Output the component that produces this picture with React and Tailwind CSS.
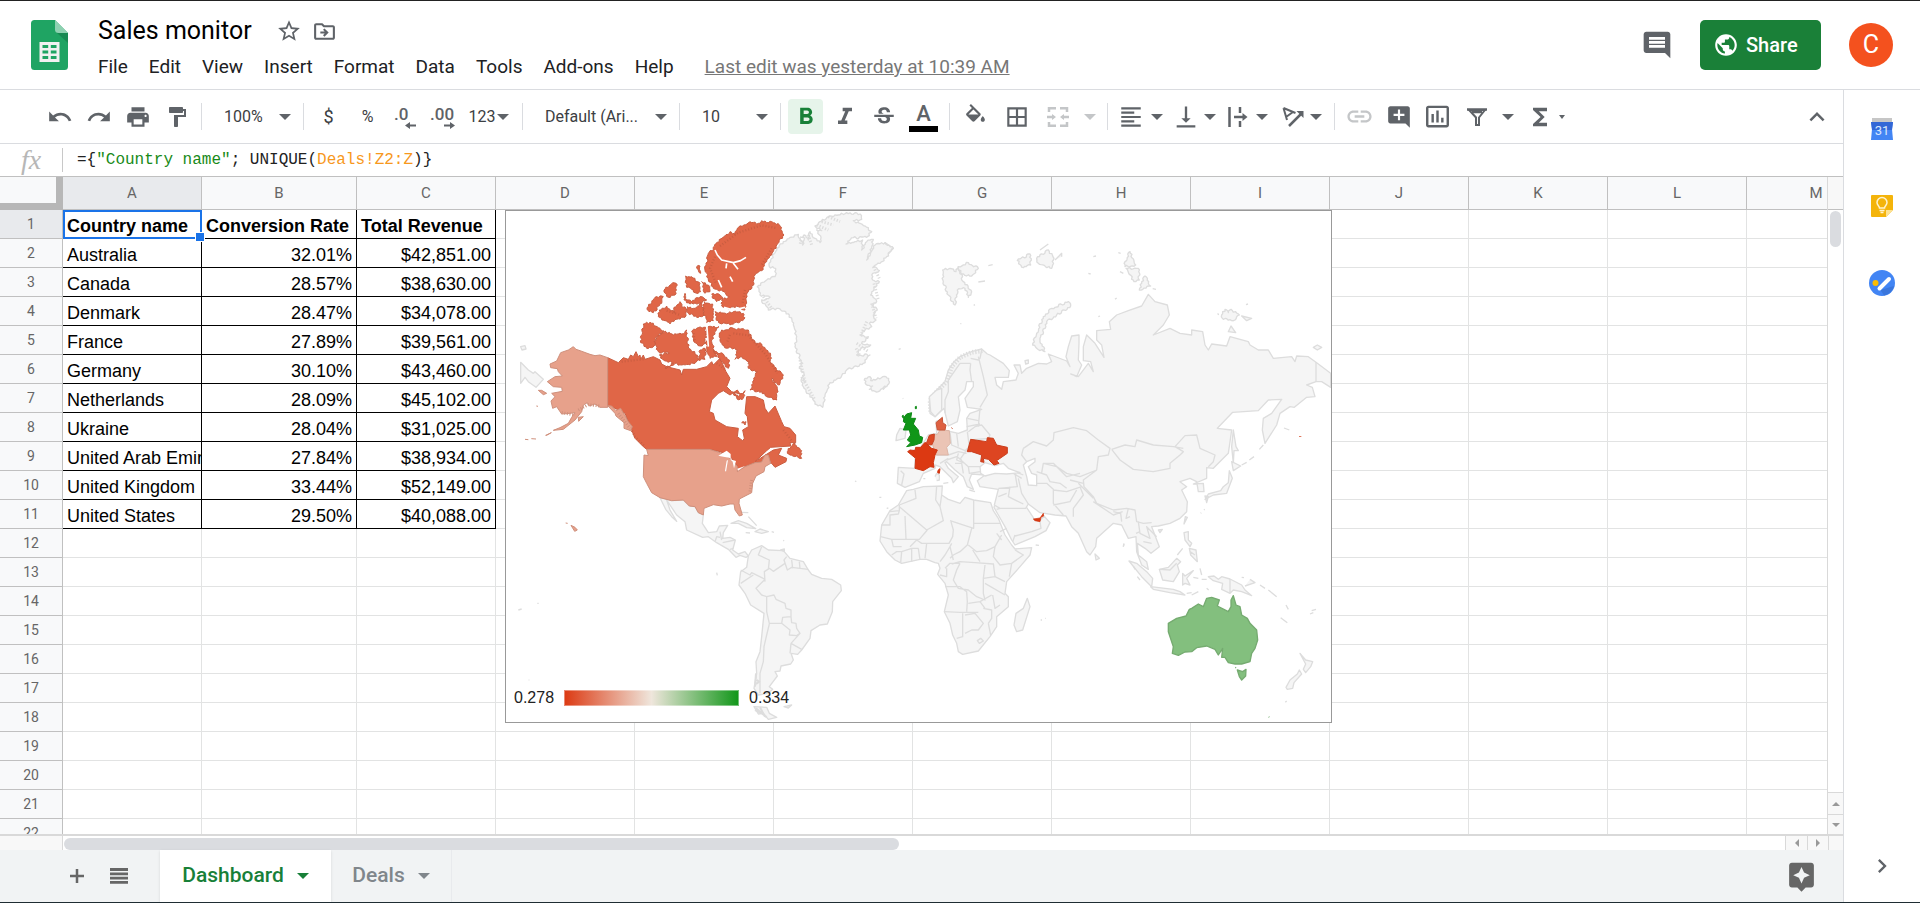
import {
  MdAddComment,
  MdAssistant,
  MdBorderAll,
  MdChevronRight,
  MdComment,
  MdFormatAlignLeft,
  MdFormatBold,
  MdFormatItalic,
  MdFormatPaint,
  MdFunctions,
  MdInsertChartOutlined,
  MdKeyboardArrowUp,
  MdLink,
  MdOutlineDriveFileMove,
  MdPrint,
  MdPublic,
  MdRedo,
  MdStarBorder,
  MdStrikethroughS,
  MdUndo,
  MdVerticalAlignBottom,
} from 'react-icons/md';

const MENUS = ['File', 'Edit', 'View', 'Insert', 'Format', 'Data', 'Tools', 'Add-ons', 'Help'];
const COLUMNS = ['A', 'B', 'C', 'D', 'E', 'F', 'G', 'H', 'I', 'J', 'K', 'L', 'M'];
const ROW_COUNT = 22;

const DATA = [
  ['Country name', 'Conversion Rate', 'Total Revenue'],
  ['Australia', '32.01%', '$42,851.00'],
  ['Canada', '28.57%', '$38,630.00'],
  ['Denmark', '28.47%', '$34,078.00'],
  ['France', '27.89%', '$39,561.00'],
  ['Germany', '30.10%', '$43,460.00'],
  ['Netherlands', '28.09%', '$45,102.00'],
  ['Ukraine', '28.04%', '$31,025.00'],
  ['United Arab Emirates', '27.84%', '$38,934.00'],
  ['United Kingdom', '33.44%', '$52,149.00'],
  ['United States', '29.50%', '$40,088.00'],
];

const Caret = ({ className = '' }) => (
  <svg viewBox="0 0 12 6" className={`h-[6px] w-[12px] shrink-0 fill-current ${className}`} aria-hidden="true">
    <path d="M0 0h12L6 6z" />
  </svg>
);

const Sep = () => <div className="mx-[5px] h-[27px] w-px shrink-0 bg-[#dadce0]" />;

const Tool = ({ label, className = 'w-[35px]', children }) => (
  <button
    type="button"
    aria-label={label}
    className={`mx-[2px] flex h-[35px] shrink-0 items-center justify-center rounded-sm ${className}`}
  >
    {children}
  </button>
);

const ToolSelect = ({ label, value, className }) => (
  <div className={`relative flex h-[35px] shrink-0 items-center ${className}`}>
    <select
      aria-label={label}
      defaultValue={value}
      className="h-full w-full appearance-none bg-transparent pl-[17px] text-[16px] text-[#3c4043]"
    >
      <option>{value}</option>
    </select>
    <Caret className="pointer-events-none absolute right-[7px]" />
  </div>
);

/* ---------- Header ---------- */

const SheetsLogo = () => (
  <svg viewBox="0 0 37 50" className="h-[50px] w-[37px] shrink-0" aria-hidden="true">
    <path d="M3.500 0H24l13 13v33.500A3.500 3.500 0 0 1 33.500 50h-30A3.500 3.500 0 0 1 0 46.500v-43A3.500 3.500 0 0 1 3.500 0z" fill="#1fa463" />
    <path d="M25 12l12 11V13z" fill="#188a53" />
    <path d="M24 0l13 13H27.500A3.500 3.500 0 0 1 24 9.500z" fill="#8ed1b1" />
    <path d="M8.500 22h20v20h-20z" fill="#f1f1f1" />
    <path d="M11.500 25h5.700v3h-5.700zM19.800 25h5.700v3h-5.700zM11.500 30.500h5.700v3h-5.700zM19.800 30.500h5.700v3h-5.700zM11.500 36h5.700v3h-5.700zM19.800 36h5.700v3h-5.700z" fill="#1fa463" />
  </svg>
);

const Header = () => (
  <header className="flex h-[89px] shrink-0 items-center border-b border-[#dadce0] pr-[27px] pl-[31px]">
    <SheetsLogo />
    <div className="ml-[20px] flex min-w-0 flex-col pt-[8px]">
      <div className="flex h-[36px] items-center pl-[10px]">
        <h1 className="text-[25px] leading-[32px] text-black">Sales monitor</h1>
        <button type="button" aria-label="Star" className="ml-[24px]">
          <MdStarBorder className="size-[26px] text-[#5f6368]" />
        </button>
        <button type="button" aria-label="Move" className="ml-[10px]">
          <MdOutlineDriveFileMove className="size-[25px] text-[#5f6368]" />
        </button>
      </div>
      <nav className="flex h-[36px] items-center gap-px text-[19px] whitespace-nowrap text-[#202124]">
        {MENUS.map((name) => (
          <button key={name} type="button" className="px-[10px]">{name}</button>
        ))}
        <a href="#history" className="ml-[20px] text-[#777] underline">
          Last edit was yesterday at 10:39 AM
        </a>
      </nav>
    </div>
    <div className="ml-auto flex shrink-0 items-center">
      <button type="button" aria-label="Comments" className="mr-[27px]">
        <MdComment className="size-8 text-[#5f6368]" />
      </button>
      <button
        type="button"
        className="flex h-[50px] w-[121px] items-center gap-[7px] rounded-[5px] bg-[#1a8038] pl-[13px] text-[20px] font-medium text-white"
      >
        <MdPublic className="size-[26px]" />
        Share
      </button>
      <button
        type="button"
        aria-label="Account"
        className="ml-[28px] flex size-[44px] items-center justify-center rounded-full bg-[#f4511e] text-[25px] text-white"
      >
        C
      </button>
    </div>
  </header>
);

/* ---------- Toolbar ---------- */

const DecimalIcon = ({ text, right }) => (
  <svg viewBox="0 0 28 28" className="mr-[5px] h-7 w-7 fill-current" aria-hidden="true">
    <text x={right ? 1 : 4} y="17" fontSize="17" fontWeight="500" fontFamily="Roboto, sans-serif">{text}</text>
    <path d={right ? 'M15 21.500h6V19l5 3.500-5 3.500v-2.500h-6z' : 'M26 21.500h-6V19l-5 3.500 5 3.500v-2.500h6z'} />
  </svg>
);

const FillIcon = () => (
  <svg viewBox="0 0 24 24" className="size-[25px] fill-current" aria-hidden="true">
    <path d="M16.560 8.940L7.620 0 6.210 1.410l2.380 2.380-5.150 5.150c-.59.59-.59 1.540 0 2.120l5.500 5.500c.29.29.68.44 1.060.44s.77-.15 1.060-.44l5.500-5.500c.59-.58.59-1.530 0-2.120zM5.210 10L10 5.210 14.790 10H5.210zM19 11.500s-2 2.170-2 3.500c0 1.100.9 2 2 2s2-.9 2-2c0-1.330-2-3.500-2-3.500z" />
  </svg>
);

const MergeIcon = () => (
  <svg viewBox="0 0 22 22" className="size-[22px] fill-none stroke-current stroke-[2.5]" aria-hidden="true">
    <path d="M2 6V2.200h7M13 2.200h7V6M2 16v3.800h7M13 19.800h7V16M0 11h7M22 11h-7" />
    <path d="M5 8l4 3-4 3zM17 8l-4 3 4 3z" className="fill-current stroke-none" />
  </svg>
);

const WrapIcon = () => (
  <svg viewBox="0 0 20 20" className="size-5 fill-none stroke-current stroke-[2.5]" aria-hidden="true">
    <path d="M1.500 0v20M12 0v6M12 14v6M6 10h10" />
    <path d="M14.500 6l5 4-5 4z" className="fill-current stroke-none" />
  </svg>
);

const RotateIcon = () => (
  <svg viewBox="0 0 22 20" className="h-5 w-[22px] fill-none stroke-current stroke-2" aria-hidden="true">
    <path d="M1.500 1l12 5M1.500 1l3.500 12M4 10l7-5" />
    <path d="M7 19L19 7" strokeWidth="2.500" />
    <path d="M21.500 4v7l-7-7z" className="fill-current stroke-none" />
  </svg>
);

const FilterIcon = () => (
  <svg viewBox="0 0 20 18" className="h-[18px] w-5 fill-none stroke-current stroke-[2.5]" aria-hidden="true">
    <path d="M2 2h16l-6 7.500V17H9V9.500z" strokeWidth="2" />
    <path d="M0 1.500h20M5 4h10" />
  </svg>
);

const Toolbar = () => (
  <div className="flex h-[54px] shrink-0 items-center overflow-hidden border-b border-[#dadce0] pl-[40px] text-[#5f6368]">
    <Tool label="Undo"><MdUndo className="size-[26px]" /></Tool>
    <Tool label="Redo"><MdRedo className="size-[26px]" /></Tool>
    <Tool label="Print"><MdPrint className="size-[26px]" /></Tool>
    <Tool label="Paint format"><MdFormatPaint className="size-[24px]" /></Tool>
    <Sep />
    <ToolSelect label="Zoom" value="100%" className="w-[91px]" />
    <Sep />
    <Tool label="Currency"><span className="text-[18px] text-[#3c4043]">$</span></Tool>
    <Tool label="Percent"><span className="text-[16px] text-[#3c4043]">%</span></Tool>
    <Tool label="Decrease decimals"><DecimalIcon text=".0" /></Tool>
    <Tool label="Increase decimals"><DecimalIcon text=".00" right /></Tool>
    <Tool label="More formats" className="w-[48px] gap-[2px] pr-[4px]">
      <span className="text-[16px] text-[#3c4043]">123</span>
      <Caret />
    </Tool>
    <Sep />
    <ToolSelect label="Font" value="Default (Ari..." className="w-[146px]" />
    <Sep />
    <ToolSelect label="Font size" value="10" className="w-[90px]" />
    <Sep />
    <Tool label="Bold" className="w-[35px] bg-[#e6f4ea] text-[#188038]"><MdFormatBold className="size-[28px]" /></Tool>
    <Tool label="Italic"><MdFormatItalic className="size-[28px]" /></Tool>
    <Tool label="Strikethrough"><MdStrikethroughS className="size-[26px]" /></Tool>
    <Tool label="Text color" className="w-[37px] flex-col">
      <span className="text-[22px] leading-[25px] font-medium">A</span>
      <span className="h-[6px] w-[29px] bg-black" />
    </Tool>
    <Sep />
    <Tool label="Fill color" className="w-[37px]"><FillIcon /></Tool>
    <Tool label="Borders" className="w-[37px]"><MdBorderAll className="size-[26px]" /></Tool>
    <Tool label="Merge cells" className="w-[37px] text-[#c4c6c8]"><MergeIcon /></Tool>
    <Tool label="Merge options" className="w-[20px] text-[#c4c6c8]"><Caret /></Tool>
    <Sep />
    <Tool label="Horizontal align" className="w-[50px] gap-[7px]"><MdFormatAlignLeft className="size-[26px]" /><Caret /></Tool>
    <Tool label="Vertical align" className="w-[50px] gap-[4px]"><MdVerticalAlignBottom className="size-[28px]" /><Caret /></Tool>
    <Tool label="Text wrapping" className="w-[50px] gap-[8px]"><WrapIcon /><Caret /></Tool>
    <Tool label="Text rotation" className="w-[50px] gap-[6px]"><RotateIcon /><Caret /></Tool>
    <Sep />
    <Tool label="Insert link" className="w-[35px] text-[#c4c6c8]"><MdLink className="size-[29px]" /></Tool>
    <Tool label="Insert comment"><MdAddComment className="size-[26px]" /></Tool>
    <Tool label="Insert chart"><MdInsertChartOutlined className="size-[29px]" /></Tool>
    <Tool label="Filter"><FilterIcon /></Tool>
    <Tool label="Filter views" className="w-[20px]"><Caret /></Tool>
    <Tool label="Functions"><MdFunctions className="size-[28px]" /></Tool>
    <svg viewBox="0 0 6 4" className="h-[4px] w-[6px] fill-current" aria-hidden="true"><path d="M0 0h6L3 4z" /></svg>
    <button type="button" aria-label="Hide the menus" className="mr-[11px] ml-auto">
      <MdKeyboardArrowUp className="size-[30px]" />
    </button>
  </div>
);

const FormulaBar = () => (
  <div className="flex h-[33px] shrink-0 items-center border-b border-[#c0c0c0]">
    <div className="w-[62px] text-center font-['Liberation_Serif',serif] text-[28px] leading-[30px] text-[#b7b7b7] italic">fx</div>
    <div className="h-[24px] w-px bg-[#c8c8c8]" />
    <div className="pl-[14px] font-['Liberation_Mono',monospace] text-[16px] whitespace-pre text-[#222]">
      {'={'}
      <span className="text-[#188a18]">"Country name"</span>
      {'; UNIQUE('}
      <span className="text-[#f7981d]">Deals!Z2:Z</span>
      {')}'}
    </div>
  </div>
);

/* ---------- Geo chart ---------- */

// Land outlines, in thirds of a pixel. Each group has its own origin.
const NORTH_AMERICA = {
  greenland: [
    'M772 260L800 240 825 230 827 205 808 200 812 180 830 150 850 125 870 112 895 103 908 135 912 105 925 120 930 95 945 115 960 128 962 108 950 90 965 92 945 78 960 65 990 48 1015 45 1040 38 1080 42 1085 58 1060 62 1095 78 1115 95 1100 112 1060 113 1038 132 1065 125 1088 120 1085 150 1100 125 1120 118 1115 140 1100 180 1125 135 1155 128 1180 145 1160 170 1140 190 1120 200 1138 212 1118 220 1118 240 1138 245 1122 262 1112 285 1130 305 1115 315 1132 330 1120 345 1128 360 1108 370 1115 380 1095 390 1080 405 1105 410 1085 430 1112 435 1075 450 1070 465 1110 465 1090 490 1040 510 1020 535 990 548 975 585 968 622 945 612 930 585 918 575 910 560 905 535 912 520 898 505 908 490 885 440 890 410 880 375 868 345 835 325 805 330 785 300 810 292 780 285z',
    'M1095 535L1110 530 1112 542 1125 540 1148 530 1166 535 1166 552 1135 575 1108 568 1118 558 1098 553z',
  ],
  land: [
    'M62 487L85 510 100 520 105 515 130 538 108 562 85 545 75 532 62 550z',
    'M62 440L75 437 78 447 66 450z',
    'M1288 590L1310 570 1325 565V630L1305 650 1292 635z',
  ],
  usa: [
    'M323 473L300 465 285 467 270 463 240 452 228 448 220 440 205 450 182 458 170 483 150 492 152 503 172 506 175 515 187 528 165 530 142 545 160 560 185 562 187 574 155 580 165 590 153 603 158 625 170 620 185 642 210 640 225 638 215 652 205 670 180 683 160 691 190 688 225 660 245 635 250 615 262 608 268 618 285 612 300 622 323 622z',
    'M323 617L345 640 348 648 372 668 372 685 392 692 397 680 385 665 362 625 348 632 335 618z',
    'M440 748H628L660 758 690 775 712 800 712 815 735 800 765 788 785 786 795 765 805 765 812 790 795 800 792 815 768 828 758 850 755 878 718 897 717 910 727 945 718 948 705 930 702 912 690 912 665 918 640 914 612 925 610 945 595 938 585 920 568 918 550 900 515 902 480 893 455 878 440 850 430 830 432 765 445 767z',
    'M213 976L225 982 232 990 224 994z',
    'M115 571L125 571 140 580 130 584z',
    'M235 652L250 650 236 664z',
    'M137 706L154 698 140 706zM75 718L85 719M94 716L108 717M197 969L203 970M109 618L114 619',
  ],
  canada: 'M323 473L355 488 370 473 385 478 392 465 400 470 408 455 415 470 420 465 422 478 430 465 435 478 460 470 480 480 485 492 500 500 540 510 545 525 550 508 590 508 620 500 635 485 640 495 660 475 678 515 690 535 680 560 695 575 720 582 712 570 690 585 670 572 655 580 635 600 628 635 640 640 645 660 680 680 715 685 712 710 728 722 733 715 728 690 745 680 742 650 735 640 740 590 765 590 790 600 795 625 805 640 825 618 845 665 852 680 870 685 887 705 887 728 870 728 872 738 812 742 800 752 765 785 820 750 845 745 835 765 860 775 858 785 825 802 815 790 812 790 805 765 795 765 785 786 765 788 735 800 712 815 710 795 695 775 685 765 660 755 628 748H440L430 740 405 715 395 690 375 640 345 625 323 617z',
  canadaIslands: [
    'M665 390L700 385 745 390 755 415 770 430 785 432 800 450 812 465 812 490 850 525 838 555 815 535 832 565 830 600 800 590 785 575 750 570 762 540 772 515 745 505 748 485 725 470 705 478 712 450 690 440 680 445 665 430 658 405z',
    'M462 425L475 405 495 393 520 405 545 402 560 390 565 440 585 460 600 478 585 490 545 495 525 490 495 505 520 490 490 480 478 465 508 460 475 455z',
    'M430 372L450 367 480 385 492 393 465 415 462 438 440 445 422 428z',
    'M575 395L590 385 617 382 615 430 600 438 580 420z',
    'M622 382L657 380 640 405 636 430 650 470 630 475 618 455z',
    'M600 450L615 445 615 478 595 480z',
    'M640 450L672 465 688 480 685 505 660 480z',
    'M648 130L690 95 705 105 712 85 745 68 775 70 785 62 820 68 838 75 852 105 830 135 815 165 800 185 785 212 765 225 762 250 745 275 738 300 735 330 715 320 690 325 665 318 665 300 688 290 672 275 640 265 625 240 615 210 625 160 640 148z',
    'M645 335L680 342 700 335 730 340 732 358 700 372 660 370 648 355z',
    'M478 330L500 318 525 340 522 322 540 305 545 320 558 325 555 352 530 358 510 372 495 362 475 350z',
    'M442 322L465 292 490 290 485 310 460 338 447 335z',
    'M492 270L518 248 532 255 525 285 505 292z',
    'M557 228L575 230 600 250 602 275 590 280 575 268 560 262z',
    'M562 320L580 325 605 310 612 345 590 352 565 340z',
    'M605 245L625 255 630 275 615 280z',
    'M635 282L660 285 668 298 650 305 638 295z',
    'M612 305L638 312 640 362 620 368 612 335z',
    'M590 200L600 198 602 220z',
    'M555 280L560 300 575 305 600 290 620 300 600 308 570 312 552 300z',
    'M872 740L885 730 890 742 905 752 905 775 890 768 870 765 862 755z',
    'M700 580L715 590 735 572 730 595 712 598z',
    'M725 668L738 665 735 675z',
  ],
};

const SOUTH_AMERICA = {
  land: [
    'M480 53L515 62 550 60 568 78 585 80 595 98 610 105 607 130 625 158 650 155 658 138 683 136 670 158 668 175 690 172 706 180 698 210 715 222 735 215 745 228 738 232 720 226 708 232 685 208 650 188 625 170 608 172 560 150 555 125 530 105 510 75 500 60 510 90 530 124 515 110 497 88z',
    'M745 228L755 210 785 197 805 210 850 212 870 235 910 245 925 270 935 283 965 295 995 298 1022 315 1024 332 998 365 997 395 982 432 960 435 933 452 930 475 905 510 893 523 873 520 880 540 872 552 843 558 840 573 825 575 832 588 808 620 818 628 805 640 775 645 762 625 770 580 768 545 780 515 785 470 792 400 752 375 735 340 717 315 722 275 740 262z',
    'M762 680L800 682 808 700 830 712 805 718 790 700 775 702z',
    'M852 680L862 678 875 675 865 684z',
    'M693 130L715 122 740 130 767 146 740 143 715 130zM765 155L780 147 805 155 785 160zM815 155L822 157M737 158L750 159M842 210L853 207 853 214z',
    'M725 97L745 98M745 110L770 137M650 278L652 286M55 390L65 387M112 370L116 370M1065 3L1069 5M1138 52L1144 52M1160 85L1165 84M86 600L88 600M850 181L852 183',
  ],
  lines:
    'M785 200L775 225 808 240 805 268M722 270L750 285 755 278 795 298M795 305L793 275 808 265 820 274 855 250M860 230L852 240 862 270 875 262 925 268M875 240L878 265M898 245L900 265M760 285L722 310M793 300L768 325 785 345 800 350 800 395M800 350L822 345 828 358 855 370 858 385 873 390 873 410M800 395L808 430 845 430 848 412 873 410 875 428 888 430 890 445 900 460 890 467 868 465 870 450 845 430M808 432L800 465 792 500 790 545 780 580 780 640M873 490L905 508M873 490L870 520M900 460L873 490M660 155L665 180M645 185L650 170 660 172M668 188L705 180M690 208L700 205',
};

const EURASIA = {
  arctic: [
    'M458 435L470 400 490 350 515 325 565 305 572 318 530 345 500 365 480 420 495 455 470 445z',
    'M188 210L210 205 228 215 235 200 250 245 275 275 265 292 255 265 232 270 225 315 205 285 190 245z',
    'M235 200L265 188 295 205 275 228 245 222z',
    'M412 182L450 162 452 195 430 203z',
    'M470 175L505 150 522 175 515 205 475 190z',
    'M735 185L750 155 767 195 735 200z',
    'M738 205L775 205 778 240 762 245z',
    'M778 270L785 250 795 228 812 258z',
    'M1025 345L1035 328 1045 338 1053 328 1078 345 1065 360 1030 358z',
  ],
  land: [
    'M150 640L148 595 165 590 165 575 195 545 205 510 222 485 240 470 275 455 305 447 322 462 330 465 370 490 388 512 385 532 345 532 350 555 365 568 370 545 408 540 415 520 402 495 420 495 425 520 440 505 475 490 500 492 515 485 505 462 560 483 570 500 558 470 565 440 575 408 597 405 597 430 595 480 605 495 590 530 572 522 595 530 625 490 640 515 632 485 610 482 610 440 620 405 645 430 672 472 665 435 650 420 650 392 692 388 688 365 710 345 745 332 785 318 805 283 825 305 862 315 868 345 850 375 820 405 870 385 900 400 935 405 935 390 968 395 975 435 985 450 995 432 1040 438 1050 410 1105 425 1110 435 1135 450 1165 450 1180 475 1235 470 1245 485 1250 468 1285 470 1308 487 1352 520 1352 562 1325 545 1308 545 1280 555 1297 562 1305 590 1280 592 1243 622 1230 620 1200 640 1190 675 1155 730 1147 690 1150 655 1175 640 1205 598 1165 600 1135 632 1058 637 1012 685 1055 690 1045 760 1000 805 980 803 980 835 940 852 970 850 972 875 955 875 950 845 930 835 900 845 920 860 905 870 922 905 920 935 900 955 870 970 835 978 815 980 838 1040 813 1060 795 1045 772 1030 775 1065 800 1085 805 1108 785 1095 770 1055 768 1010 745 1015 725 975 700 970 650 1015 647 1040 630 1065 620 1055 595 1000 575 980 558 948 525 945 480 938 445 912 437 925 360 925 343 915 355 868 300 860 292 842 315 825 275 822 268 840 280 868 262 860 250 830 225 810 200 785 195 788 205 805 235 830 220 848 215 835 180 800 165 795 165 805 130 820 118 845 75 862 52 850 55 802 105 805 105 770 85 755 120 745 145 705 170 700 168 665 187 655 190 690 235 700 262 690 260 655 270 640 305 628 262 622 255 595 280 560 280 545 260 545 255 570 235 590 240 630 232 665 205 678 192 625 165 650z',
    'M48 722L50 705 60 685 78 690 75 715z',
    'M480 150L505 132M525 180L545 160 545 170M325 197L338 194M295 246L315 243',
    'M715 158L722 160M625 220L632 222M640 170L648 168M818 266L828 268M720 215L730 220',
    'M1085 348L1115 355 1100 362zM1045 395L1053 378 1067 398zM1300 442L1312 435 1325 442 1312 450zM1013 340L1016 345M1098 314L1104 312',
    'M435 482L445 480 445 490 437 492zM705 298L710 294M655 350L660 348',
    'M1060 690L1068 740 1075 752 1062 752 1060 790 1055 740z',
    'M1055 785L1082 798 1060 812zM1048 812L1057 835 1040 880 1000 885 975 898 985 882 1022 872 1030 860 1045 848zM975 888L985 890 980 908z',
    'M1085 795L1100 787M1108 780L1122 770M1138 748L1150 735M1212 684L1228 690M912 972L916 950 922 952zM165 830L170 820 178 825 178 840 170 842M190 850L205 848M268 870L285 875',
    'M962 940L964 938M972 930L974 928M730 1040L732 1030M56 448L62 446M68 595L70 596M241 371L244 371M281 316L285 314M130 836L136 836M0 180L15 128 40 145 22 165z',
    'M0 540L15 532 26 550 10 568z',
  ],
  water: [
    'M302 820L300 800 315 788 345 797 370 790 385 805 420 818 380 822 345 820 315 828z',
    'M430 795L440 785 465 775 465 785 445 800 455 820 470 825 470 857 445 855 440 830z',
  ],
  lines:
    'M195 640L195 600 205 575 205 540 240 490 272 490M275 545L270 510 272 490M272 475L295 480 300 475M295 470L310 530 322 585 300 622M305 450L300 475M430 745L460 725 500 738 520 720 522 698 580 683 620 692 655 720 690 745 685 765 655 770 650 810 600 830 560 820 530 800 490 790 485 818M430 745L425 765 440 785M695 748L735 735 765 740 770 720 820 735 880 740 910 745M900 765L870 790 870 805 820 815 760 808 720 780 695 748M900 765L910 755 885 740 915 707 950 705 960 745 1005 765 1000 785 985 800M650 810L610 840 612 860 640 890 650 910 700 930 740 925 765 930 770 965 790 970 815 968M600 860L610 885 580 925 580 950M415 835L425 880 445 912M470 850L500 850 520 868 520 910 550 945M520 870L560 875 605 860M520 915L570 905 590 870M470 815L500 825 510 845 540 850 560 865M490 790L520 790 560 830 600 820M570 840L610 850M405 820L412 860 355 865M390 860L385 890 430 912M355 890L380 880M210 697L215 735 255 752 268 740 262 695M265 695L285 680 305 675 330 705 325 715 270 720M262 655L295 662M260 680L300 672M260 750L240 778 265 800 300 800M265 800L268 820 300 815M225 790L245 790 250 820M200 780L230 770 245 780M170 765L205 765 235 755 260 760M205 775L180 790M62 812L72 822 65 855M380 805L430 825M400 820L425 835M700 935L722 940 725 965M745 925L738 955 750 950M775 965L780 1000 810 1015 800 980 830 1010M768 1000L780 995M640 905L700 945 728 935M790 1025L815 1030M1308 487V545M595 850L640 895M300 625L295 680M230 700L235 740M235 760L230 780 255 790',
};

const SOUTH = {
  land: [
    'M-100 32L-80 28 -50 20 7 18 5 45 25 58 60 70 75 52 101 60 152 68 160 92 175 115 195 165 215 195 225 207 275 203 270 225 240 260 200 305 195 340 205 350 205 380 170 410 170 440 150 470 115 513 68 523 55 515 50 490 38 465 30 430 13 395 25 345 15 310 -7 283 0 265 -5 250 -15 248 -40 238 -60 238 -115 250 -135 240 -160 215 -180 183 -175 135 -150 92 -125 75z',
    'M262 355L270 380 248 450 230 455 222 435 228 400 250 385z',
    'M162 82L170 60 205 50 255 75 278 110 285 122 300 122 312 108 330 128 318 152 285 170 225 195 215 180 195 140 175 105z',
    'M465 222L478 235 468 240zM655 150L667 148 660 158z',
    'M732 158L745 155 745 180 755 190 750 200 735 180zM748 205L768 210 772 245 752 225zM712 225L728 205M750 215L765 225',
    'M658 268L685 262 710 235 722 245 712 255 718 275 700 305 668 300z',
    'M567 243L590 250 620 275 638 295 635 320 605 290z',
    'M632 320L700 328 720 335 735 345 690 338 640 328z',
    'M728 280L735 288 760 272 740 295 750 315 735 310 728 315z',
    'M740 340L755 338M755 345L775 335M780 265L785 285M760 292L775 295M785 298L800 298M580 258L585 268M592 290L600 300M800 325L806 330',
    'M805 290L822 288 835 298 845 290 870 297 905 315 915 330 935 347 905 335 880 330 870 340 845 328 848 310 820 302z',
    'M915 318L945 308 930 298M905 292L912 293M960 315L975 325M985 330L1010 350M1038 375L1045 388M1022 413L1042 428M1110 402L1120 398M1115 392L1128 388',
    'M1080 520L1097 540 1118 545 1112 560 1097 578 1090 568 1097 552z',
    'M1038 622L1050 600 1072 582 1078 570 1085 582 1062 608 1058 625 1042 628z',
    'M1036 667L1040 663M302 420L306 420M316 415L318 415M287 195L297 196M550 200L552 192',
  ],
  lines:
    'M-75 30L-72 55 -122 75 -122 92 -150 95M-122 80L-40 150 10 122 0 80 -13 60 -10 18M5 45L0 80M101 60V145L30 122M101 130H180M-105 108L-102 178 -145 178M-175 135L-150 135 -150 105 -125 102 -122 92M-178 170L-145 178 -140 200 -115 200M-102 178L-62 178 -38 150M-90 200L-70 180 -55 190 -42 190 27 190 38 170 40 150 33 125M95 145L82 195 60 215 40 225 30 235M85 195L110 215 140 212 165 200 185 165M35 252L60 245 105 248 160 252M98 210L120 245M165 200L160 230 180 255 215 250 250 225 225 210M215 250L208 290M160 250L165 290 195 305M135 255L130 295 165 290M60 250L50 270 40 300 55 325 85 330 110 350 135 360 130 340 130 295M15 320L60 320 80 335 82 365 80 395M13 395L60 397 115 397M68 400V470L50 475M75 405L105 400 130 430 115 450 95 450 75 460M130 385L155 390 155 415 145 430M85 370L120 365 155 345M120 365L135 385M158 345L165 385 180 375M135 310L195 345M145 430L152 465M112 482L122 475 130 483 118 490zM-45 235L-40 190M-85 205L-85 245M-65 205L-60 240M-115 215L-118 248M-145 225L-130 215 -115 215 -85 205 -65 205M0 245L15 225 30 200 35 190M15 265L30 250 60 250M0 285L20 290 20 265M30 200L40 240M300 125L303 145 275 155 225 168M180 155L200 145M170 160L185 180M870 297V340M660 268L690 270 710 250M225 165L218 185M205 50L200 80 170 88',
};

const COUNTRIES = [
  { name: 'Germany', fill: '#ebc4b5', stroke: '#dcb6a7', d: 'M162 705L172 703 180 690 208 692 211 730 200 742 205 765 168 765 158 735z' },
  { name: 'Denmark', fill: '#de6041', stroke: '#c85639', d: 'M168 668L187 652 188 668 198 675 195 690 172 690zM214 683L218 686' },
  { name: 'Netherlands', fill: '#dc4825', stroke: '#c94121', d: 'M138 733L148 706 163 702 162 720 155 735z' },
  { name: 'France', fill: '#dc3912', stroke: '#cf3511', d: 'M83 755L90 750 105 752 107 742 122 742 135 727 155 745 172 750 165 765 160 788 162 802 150 800 130 812 105 805 107 775zM174 811L180 806 178 820 173 818z' },
  { name: 'Ukraine', fill: '#dd4521', stroke: '#ca3e1d', d: 'M272 718L320 725 322 713 340 715 350 735 382 742 382 760 350 782 357 790 342 795 325 778 310 775 312 787 302 785 305 765 275 755 262 755z' },
  { name: 'United Kingdom', fill: '#109618', stroke: '#0e8a16', d: 'M72 652L80 642 95 638 92 655 107 655 100 672 115 690 118 708 128 712 125 728 105 735 80 740 92 728 82 720 92 705 88 690 70 690 78 670 70 665zM106 620L109 619 109 626 106 626zM66 648L70 646 70 655z' },
];

// Breaks the sides of a closed outline into short steps, so that it reads as a fjord coast.
const roughen = (d) => {
  const n = d.match(/-?\d+/g).map(Number);
  const points = [];
  for (let i = 0; i < n.length; i += 2) {
    const [x1, y1] = [n[i], n[i + 1]];
    const [x2, y2] = [n[(i + 2) % n.length], n[(i + 3) % n.length]];
    const length = Math.hypot(x2 - x1, y2 - y1) || 1;
    const steps = Math.max(1, Math.round(length / 5));
    for (let s = 0; s < steps; s += 1) {
      const shift = s === 0 ? 0 : Math.sin(x1 * 3 + y1 * 7 + s * s * 1.7) * 3;
      const x = x1 + ((x2 - x1) * s) / steps - ((y2 - y1) / length) * shift;
      const y = y1 + ((y2 - y1) * s) / steps + ((x2 - x1) / length) * shift;
      points.push(`${x.toFixed(1)} ${y.toFixed(1)}`);
    }
  }
  return `M${points.join('L')}z`;
};

const Shapes = ({ paths, ...rest }) => (
  <g {...rest}>{paths.map((d) => <path key={d} d={d} />)}</g>
);

const LAND = { fill: '#f5f5f5', stroke: '#dddddd', strokeWidth: 4 };
const GREENLAND = NORTH_AMERICA.greenland.map(roughen);
const CANADA = [NORTH_AMERICA.canada, ...NORTH_AMERICA.canadaIslands.map(roughen)];
const ARCTIC = EURASIA.arctic.map(roughen);

const GeoChart = () => (
  <figure
    aria-label="Conversion rate by country"
    className="absolute top-[33px] left-[505px] h-[513px] w-[827px] overflow-hidden border border-[#999] bg-white"
  >
    <svg viewBox="0 0 2475 1533" className="h-full w-full" strokeLinejoin="round" aria-hidden="true">
      <g transform="translate(1302 807)">
        <Shapes paths={SOUTH.land} {...LAND} />
        <path d={SOUTH.lines} {...LAND} fill="none" />
      </g>
      <g transform="translate(1122 -33)">
        <Shapes paths={EURASIA.land} {...LAND} />
        <Shapes paths={ARCTIC} {...LAND} />
        {/* fjords and skerries along the Norwegian coast */}
        <path d="M152 635L150 600 170 575 200 545 215 500 240 472 275 457 310 452" fill="none" stroke="#dddddd" strokeWidth="14" strokeDasharray="4 5" />
        <path d={EURASIA.lines} {...LAND} fill="none" />
        <Shapes paths={EURASIA.water} {...LAND} fill="#fff" />
        {COUNTRIES.map(({ name, fill, stroke, d }) => (
          <path key={name} d={d} fill={fill} stroke={stroke} strokeWidth="3" />
        ))}
        <path d="M1257 708h7v3h-7z" fill="#e07a60" />
      </g>
      <g transform="translate(-18 807)">
        <Shapes paths={SOUTH_AMERICA.land} {...LAND} />
        <path d={SOUTH_AMERICA.lines} {...LAND} fill="none" />
        <path d="M768 580L765 620M770 600L778 605 768 612M768 685L800 712M780 682L795 710M765 690L785 700" {...LAND} strokeWidth="6" fill="none" />
      </g>
      <g transform="translate(1302 807)">
        <path d="M280 117L300 114 310 100 311 108 303 112 300 125 285 122z" fill="#dc3912" stroke="#cf3511" strokeWidth="2" />
        <g fill="#83bf7e" stroke="#75ab70" strokeWidth="4">
          <path d="M685 430L710 415 738 408 748 388 755 385 775 372 790 380 800 355 815 352 838 360 832 378 865 395 873 380 873 360 880 347 888 375 900 380 905 405 922 415 930 430 950 450 953 480 945 505 935 520 930 545 905 552 885 552 865 548 855 532 845 532 848 505 835 525 825 508 800 498 770 503 755 515 735 516 715 526 697 520 700 500 685 455z" />
          <path d="M892 570L908 575 918 568 917 588 905 600 898 590zM886 562L888 564M986 710L988 712" />
        </g>
      </g>
      <g transform="translate(-18 -33)">
        <Shapes paths={GREENLAND} {...LAND} />
        <Shapes paths={NORTH_AMERICA.land} {...LAND} />
        <path
          d="M905 110L900 135M925 105L935 135M950 75L985 90M965 65L1000 75M985 50L1020 65M1120 200L1138 235M1122 250L1135 300M1115 310L1128 355M1100 365L1085 400M1070 430L1105 455M1068 445L1080 468M900 480L915 545M905 530L945 600M790 290L815 325"
          fill="none" stroke="#dddddd" strokeWidth="9" strokeDasharray="4 5"
        />
        <Shapes paths={CANADA} fill="#e06647" stroke="#c95d41" strokeWidth="3" />
        <path
          d="M660 138L715 98 785 76 828 84M815 145L785 195M645 170L630 205 648 250M735 270L728 310M700 400L745 406 798 465 832 520M690 405L680 430M650 490L675 508M850 690L875 722M380 660L405 710 435 740M580 400L585 425M500 332L540 345M365 485L435 477"
          fill="none" stroke="#c95d41" strokeWidth="7" strokeDasharray="3 6"
        />
        <path d="M645 150L652 165 665 180 700 188 722 182 738 172M680 190L678 205M700 190L714 208M655 240L665 262M690 230L698 245M672 322L700 330 735 322M620 370L625 440" fill="none" stroke="#fff" strokeWidth="5" />
        <Shapes paths={NORTH_AMERICA.usa} fill="#e7a18b" stroke="#cf907c" strokeWidth="3" />
        <path d="M235 630L265 614 300 618M185 638L225 645M355 640L390 685M755 840L750 875" fill="none" stroke="#cf907c" strokeWidth="9" strokeDasharray="3 5" />
        <path d="M655 767L680 752 692 762 692 774 670 770zM684 780L678 815 675 812 680 782zM690 778L708 783 702 805 698 785zM712 806L735 798 714 812z" fill="#fff" />
      </g>
    </svg>
    <figcaption className="absolute bottom-[14px] left-[8px] flex items-center gap-[10px] font-['Liberation_Sans',sans-serif] text-[16px] leading-[20px] text-[#222]">
      <span>0.278</span>
      <span className="h-[16px] w-[175px] border border-white/40 bg-[linear-gradient(to_right,#dc3912,#efe6dc,#109618)] bg-origin-border" />
      <span>0.334</span>
    </figcaption>
  </figure>
);

/* ---------- Grid ---------- */

const cellClass = (row, col) => {
  if (col > 2 || row > 10) return 'border-[#e2e3e3]';
  if (row === 0) return 'border-black font-bold';
  return col === 0 ? 'border-black' : 'border-black text-right';
};

const Grid = () => (
  <div className="relative min-w-0 flex-1 overflow-hidden bg-white">
    <table className="w-[1886px] table-fixed border-separate border-spacing-0">
      <colgroup>
        <col className="w-[63px]" />
        {COLUMNS.map((c) => <col key={c} className={c === 'B' ? 'w-[155px]' : 'w-[139px]'} />)}
      </colgroup>
      <thead>
        <tr className="h-[33px]">
          <td className="border-r-[7px] border-b-[7px] border-[#b7b7b7] bg-[#f8f9fa]" />
          {COLUMNS.map((c) => (
            <th
              key={c}
              scope="col"
              className={`border-r border-b border-[#c0c0c0] text-[15px] leading-[20px] font-normal text-[#666] ${c === 'A' ? 'bg-[#e8eaed]' : 'bg-[#f8f9fa]'}`}
            >
              {c}
            </th>
          ))}
        </tr>
      </thead>
      <tbody className="font-['Liberation_Sans',sans-serif] text-[18px] text-black">
        {Array.from({ length: ROW_COUNT }, (_, row) => (
          <tr key={row} className="h-[29px]">
            <th
              scope="row"
              className={`border-r border-b border-[#c0c0c0] font-[Roboto,sans-serif] text-[14px] leading-[20px] font-normal text-[#666] ${row === 0 ? 'bg-[#e8eaed]' : 'bg-[#f8f9fa]'}`}
            >
              {row + 1}
            </th>
            {COLUMNS.map((c, col) => (
              <td
                key={c}
                className={`border-r border-b px-[4px] pt-[4px] pb-0 leading-[24px] whitespace-nowrap ${row === 0 && col === 0 ? 'relative' : 'overflow-hidden'} ${cellClass(row, col)}`}
              >
                {DATA[row]?.[col]}
                {row === 0 && col === 0 && (
                  <span className="absolute top-0 -right-px -bottom-px left-0 border-2 border-[#1a73e8]">
                    <span className="absolute -right-[5px] -bottom-[5px] size-[10px] border border-white bg-[#1a73e8]" />
                  </span>
                )}
              </td>
            ))}
          </tr>
        ))}
      </tbody>
    </table>
    <GeoChart />
  </div>
);

const ScrollButton = ({ label, d, className }) => (
  <button type="button" aria-label={label} className={`flex shrink-0 items-center justify-center border-[#d9d9d9] bg-[#f8f8f8] ${className}`}>
    <svg viewBox="0 0 8 8" className="size-2 fill-[#999]"><path d={d} /></svg>
  </button>
);

const VerticalScroll = () => (
  <div className="flex w-4 shrink-0 flex-col border-l border-[#d9d9d9]">
    <div className="h-[33px] border-b border-[#c0c0c0] bg-[#f8f8f8]" />
    <div className="flex-1 px-[2px] pt-px">
      <div className="h-[36px] rounded-full bg-[#dadce0]" />
    </div>
    <ScrollButton label="Scroll up" d="M0 6h8L4 2z" className="h-[22px] border-t" />
    <ScrollButton label="Scroll down" d="M0 2h8L4 6z" className="h-[20px] border-t" />
  </div>
);

const HorizontalScroll = () => (
  <div className="flex h-[14px] shrink-0">
    <div className="w-[63px] border-r border-[#d9d9d9] bg-[#f8f8f8]" />
    <div className="flex-1 pt-[2px] pl-px">
      <div className="h-[12px] w-[48.5%] rounded-full bg-[#dadce0]" />
    </div>
    <ScrollButton label="Scroll left" d="M6 0v8L2 4z" className="w-[22px] border-l" />
    <ScrollButton label="Scroll right" d="M2 0v8l4-4z" className="w-[22px] border-x" />
    <div className="w-[14px] bg-[#f8f8f8]" />
  </div>
);

const SheetTabs = () => (
  <footer className="flex h-[52px] shrink-0 items-stretch bg-[#f1f3f4] pl-[62px] text-[#666]">
    <button type="button" aria-label="Add sheet" className="w-[30px]">
      <svg viewBox="0 0 14 14" className="mx-auto size-[14px] stroke-current stroke-[2.5]"><path d="M7 0v14M0 7h14" /></svg>
    </button>
    <button type="button" aria-label="All sheets" className="ml-[12px] w-[30px]">
      <svg viewBox="0 0 18 16" className="mx-auto h-[16px] w-[18px] stroke-current stroke-[2.8]"><path d="M0 1.500h18M0 5.800h18M0 10.100h18M0 14.400h18" /></svg>
    </button>
    <button type="button" className="ml-[26px] flex w-[171px] items-center justify-center gap-[13px] bg-white text-[21px] font-medium text-[#188038] shadow-sm">
      Dashboard
      <Caret />
    </button>
    <button type="button" className="flex w-[121px] items-center justify-center gap-[13px] border-r border-[#e8eaed] text-[21px] font-medium text-[#80868b]">
      Deals
      <Caret />
    </button>
    <button type="button" aria-label="Explore" className="mr-[25px] ml-auto">
      <MdAssistant className="size-[33px]" />
    </button>
  </footer>
);

/* ---------- Side panel ---------- */

const SidePanel = () => (
  <aside className="flex w-[77px] shrink-0 flex-col items-center border-l border-[#dadce0] pt-[27px]">
    <button type="button" aria-label="Calendar">
      <svg viewBox="0 0 24 24" className="size-6">
        <path d="M2 1h20v4H2z" fill="#c6c6c6" />
        <path d="M1 5h22l-1 7 1 11H1l1-11z" fill="#4285f4" />
        <path d="M1 5h22l-1 8H2z" fill="#3367d6" />
        <text x="12" y="18" fontSize="13" textAnchor="middle" fill="#dbe7fd" fontFamily="Roboto, sans-serif">31</text>
      </svg>
    </button>
    <button type="button" aria-label="Keep" className="mt-[53px]">
      <svg viewBox="0 0 24 24" className="size-6">
        <path d="M2 1h20a1 1 0 0 1 1 1v14l-7 7H2a1 1 0 0 1-1-1V2a1 1 0 0 1 1-1z" fill="#f4b40b" />
        <path d="M16 23v-7h7z" fill="#fde293" />
        <path d="M9.500 14c0-2-2.500-2.800-2.500-5.500a5 5 0 0 1 10 0c0 2.700-2.500 3.500-2.500 5.500zM9.500 16.500h5M10.500 18.500h3" fill="none" stroke="#fff3cf" strokeWidth="1.500" />
      </svg>
    </button>
    <button type="button" aria-label="Tasks" className="mt-[52px]">
      <svg viewBox="0 0 26 26" className="size-[26px]">
        <circle cx="13" cy="13" r="13" fill="#4285f4" />
        <path d="M11.500 20L25 16a13 13 0 0 1-10 9.500z" fill="#3a76dc" />
        <circle cx="6.500" cy="13" r="3" fill="#fbbc04" />
        <path d="M10.500 18.500L20 9" stroke="#fff" strokeWidth="4" strokeLinecap="round" />
      </svg>
    </button>
    <button type="button" aria-label="Hide side panel" className="mt-auto mb-[22px] text-[#5f6368]">
      <MdChevronRight className="size-[28px]" />
    </button>
  </aside>
);

const App = () => (
  <div className="flex h-screen flex-col overflow-hidden border-t border-b border-t-[#222] border-b-[#1f2d33] bg-white font-[Roboto,sans-serif]">
    <Header />
    <div className="flex min-h-0 flex-1">
      <main className="flex min-w-0 flex-1 flex-col">
        <Toolbar />
        <FormulaBar />
        <div className="flex min-h-0 flex-1 border-b-2 border-[#d9d9d9]">
          <Grid />
          <VerticalScroll />
        </div>
        <HorizontalScroll />
        <SheetTabs />
      </main>
      <SidePanel />
    </div>
  </div>
);

export default App;
